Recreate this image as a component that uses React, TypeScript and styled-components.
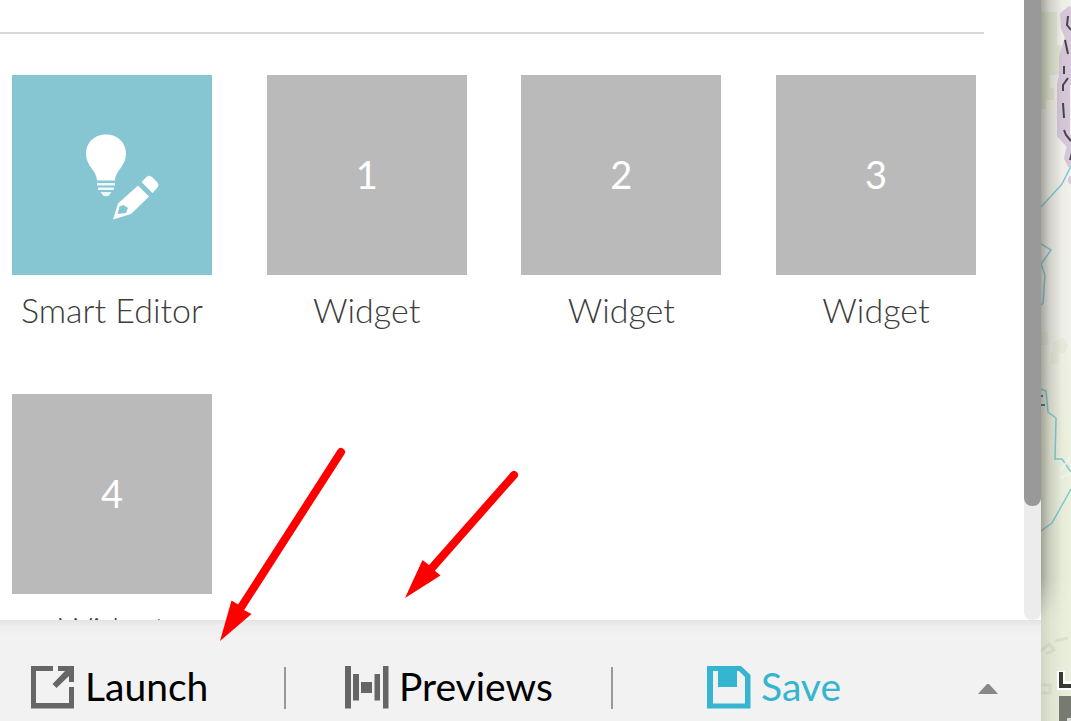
import React from "react";
import styled, { createGlobalStyle } from "styled-components";

const GlobalStyle = createGlobalStyle`
  *, *::before, *::after { box-sizing: border-box; }
  body { margin: 0; background: #fff; font-family: Lato, "Liberation Sans", sans-serif; }
`;

const Page = styled.div`
  position: relative;
  display: flex;
  height: 100vh;
  overflow: hidden;
`;

const Panel = styled.main`
  flex: 1;
  min-width: 0;
  display: flex;
  flex-direction: column;
  background: #fff;
`;

const ScrollArea = styled.div`
  flex: 1;
  min-height: 0;
  display: flex;
  overflow: hidden;
`;

const Content = styled.section`
  flex: 1;
  min-width: 0;
  padding: 32px 40px 0 0;
`;

const Rule = styled.hr`
  height: 2px;
  margin: 0 0 41px;
  border: 0;
  background: #d9d9d9;
`;

const WidgetGrid = styled.div`
  display: grid;
  grid-template-columns: repeat(4, 200px);
  justify-content: space-between;
  row-gap: 62px;
  padding: 0 8px 0 12px;
`;

const WidgetItem = styled.button`
  display: flex;
  flex-direction: column;
  align-items: center;
  gap: 13px;
  padding: 0;
  border: 0;
  background: none;
  font-family: inherit;
  cursor: pointer;
`;

const Tile = styled.span<{ $active?: boolean }>`
  display: flex;
  align-items: center;
  justify-content: center;
  width: 200px;
  height: 200px;
  padding-bottom: ${(p) => (p.$active ? 0 : 2)}px;
  background: ${(p) => (p.$active ? "#85c6d2" : "#bababa")};
  color: #fff;
  font-size: 38px;
  line-height: 44px;
`;

const WidgetLabel = styled.span`
  color: #3c3c3c;
  font-size: 34px;
  font-weight: 300;
  line-height: 44px;
  white-space: nowrap;
`;

const ScrollTrack = styled.div`
  flex: 0 0 17px;
  border-radius: 0 0 8px 8px;
  background: #ececec;
`;

const ScrollThumb = styled.div`
  height: calc(100% - 114px);
  border-radius: 0 0 8px 8px;
  background: #999;
`;

const Footer = styled.footer`
  display: grid;
  grid-template-columns: 286fr 327fr 428fr;
  padding: 45px 0 12px;
  background: linear-gradient(#e3e3e3, #eeeeee 6px, #f2f2f2 16px);
`;

const FooterCell = styled.div<{ $start: number; $end?: number }>`
  display: flex;
  align-items: center;
  justify-content: space-between;
  padding: 0 ${(p) => p.$end ?? 0}px 0 ${(p) => p.$start}px;
`;

const Divider = styled.span`
  align-self: flex-end;
  width: 2px;
  height: 42px;
  background: #999;
`;

const Action = styled.button<{ $accent?: boolean }>`
  display: flex;
  align-items: center;
  gap: 10px;
  padding: 0;
  border: 0;
  background: none;
  color: ${(p) => (p.$accent ? "#35b5cf" : "#000")};
  font-family: inherit;
  font-size: 39px;
  line-height: 44px;
  cursor: pointer;
`;

const ActionText = styled.span`
  height: 44px;
  line-height: 42px;
`;

const CaretButton = styled.button`
  display: flex;
  padding: 4px 0 0;
  border: 0;
  background: none;
  cursor: pointer;
`;

const MapStrip = styled.aside`
  flex: 0 0 30px;
  overflow: hidden;
  background: #eef2e0;
  svg { display: block; }
`;

const Annotations = styled.svg`
  position: absolute;
  top: 0;
  left: 0;
  pointer-events: none;
`;

const SmartEditorIcon = () => (
  <svg width="96" height="92" viewBox="64 131 96 92" fill="#fff" aria-hidden="true">
    <path d="M97 182.500C97 173 86 168 86 156C86 144 95 136.500 106 136.500S126 144 126 156C126 168 115 173 115 182.500Z" />
    <path d="M97 185H115V187.500H97ZM98 189.500H114V192H98ZM100.500 194H111.500L109 197.500Q106 199 103 197.500Z" opacity="0.85" />
    <path
      fillRule="evenodd"
      d="M138 187.500L149 198.500L131 216L113 221.500L118 205.500ZM119.500 208.500L117.500 216L126 215L128 210L123.500 207Z"
    />
    <path d="M141.500 184L146.500 179Q149.500 176.500 152.500 179.500L157.500 184.500Q159.500 187.500 157 190L152.500 195Z" />
  </svg>
);

const LaunchIcon = () => (
  <svg width="44" height="44" viewBox="0 0 44 44" fill="#666" aria-hidden="true">
    <path d="M0 1H22V6H5V38H38V22H43V43.500H0Z" />
    <path d="M27 1H43V17H38V11L25.500 23L21.500 19L34 6H27Z" />
  </svg>
);

const PreviewsIcon = () => (
  <svg width="44" height="44" viewBox="0 0 44 44" fill="#666" aria-hidden="true">
    <path d="M0 1H6V43.500H0ZM8 9H14V35.500H8ZM16 17H27V28H16ZM29.500 9H35V35.500H29.500ZM38 1H43.500V43.500H38Z" />
  </svg>
);

const SaveIcon = () => (
  <svg width="44" height="44" viewBox="0 0 44 44" fill="#35b5cf" aria-hidden="true">
    <path fillRule="evenodd" d="M0 1H34L43.500 10V43.500H0ZM6 6V38.500H38V12L32 6H30V22H11V6Z" />
  </svg>
);

const MapDrawing = () => (
  <svg width="30" height="721" viewBox="1041 0 30 721" fill="none" aria-hidden="true">
    <defs>
      <linearGradient id="land" x1="0" y1="0" x2="0" y2="1">
        <stop offset="0" stopColor="#f2f1ea" />
        <stop offset="0.45" stopColor="#f2f2ec" />
        <stop offset="0.6" stopColor="#edf1df" />
        <stop offset="1" stopColor="#e9eedb" />
      </linearGradient>
      <linearGradient id="edge">
        <stop offset="0" stopColor="#4b4d43" stopOpacity="0.46" />
        <stop offset="0.3" stopColor="#4b4d43" stopOpacity="0.2" />
        <stop offset="0.7" stopColor="#4b4d43" stopOpacity="0.03" />
        <stop offset="1" stopColor="#4b4d43" stopOpacity="0" />
      </linearGradient>
      <linearGradient id="fade" x1="0" y1="0" x2="0" y2="1">
        <stop offset="0" stopColor="#fff" />
        <stop offset="0.8" stopColor="#fff" />
        <stop offset="0.86" stopColor="#555" />
        <stop offset="1" stopColor="#555" />
      </linearGradient>
      <mask id="shade">
        <rect x="1041" width="30" height="721" fill="url(#fade)" />
      </mask>
    </defs>
    <rect x="1041" width="30" height="721" fill="url(#land)" />
    <path d="M1041 12H1057V45H1064V75H1050V88H1054V100H1046V109H1041Z" fill="#e3e9d5" />
    <path d="M1041 332H1048V345H1041ZM1053 342L1063 338L1068 345L1065 353H1059V364H1051V353H1053Z" fill="#e9eddd" />
    <path d="M1071 8L1063 15L1064 28L1068 37L1062 57V75L1060 84V135L1070 146L1067 158L1071 166" stroke="#d8c8dc" strokeWidth="6" />
    <path d="M1063 10H1071V150L1060 135V86L1063 55L1065 38Z" fill="#d8c8dc" />
    <path d="M1070 85H1071V135H1070Z" fill="#f4f1f2" />
    <circle cx="1073" cy="180" r="5" fill="#d8c8dc" />
    <path d="M1068 16L1067 25L1071 30M1065 40L1068 54M1064 66V74M1068 78L1063 85V91M1063 103L1064 118M1064 130L1066 135L1071 141M1072 153L1070 160" stroke="#454545" strokeWidth="2" />
    <path d="M1041 207L1062 184L1071 166M1041 244L1051 250L1041 264L1045 275L1043 303L1041 305M1041 389L1046 391L1048 412L1056 418L1055 459H1062L1071 472M1071 489L1052 523L1041 531" stroke="#7fcbd6" strokeWidth="1.500" />
    <path d="M1041 396H1043M1041 405H1045" stroke="#34788c" strokeWidth="2" />
    <path d="M1060 471L1071 456M1060 478L1071 473" stroke="#f3f5ea" strokeWidth="2" />
    <path d="M1041 651L1049 644L1054 650L1046 654M1055 641L1068 638M1041 685H1050V693H1041" stroke="#dde2cf" strokeWidth="3" />
    <rect x="1041" width="30" height="721" fill="url(#edge)" mask="url(#shade)" />
    <path d="M1057 671H1065V681H1071V690H1057Z" fill="#fff" />
    <path d="M1059 672H1063V684H1071V688H1059Z" fill="#383a38" />
    <path d="M1059 696H1071V721H1059Z" fill="#767a71" />
    <path d="M1067 718H1071V721H1067Z" fill="#ddd" />
  </svg>
);

const widgets = ["1", "2", "3", "4"];

export default function App() {
  return (
    <Page>
      <GlobalStyle />
      <Panel>
        <ScrollArea>
          <Content>
            <Rule />
            <WidgetGrid>
              <WidgetItem type="button">
                <Tile $active>
                  <SmartEditorIcon />
                </Tile>
                <WidgetLabel>Smart Editor</WidgetLabel>
              </WidgetItem>
              {widgets.map((n) => (
                <WidgetItem type="button" key={n}>
                  <Tile>{n}</Tile>
                  <WidgetLabel>Widget</WidgetLabel>
                </WidgetItem>
              ))}
            </WidgetGrid>
          </Content>
          <ScrollTrack>
            <ScrollThumb />
          </ScrollTrack>
        </ScrollArea>
        <Footer>
          <FooterCell $start={31}>
            <Action type="button">
              <LaunchIcon />
              <ActionText>Launch</ActionText>
            </Action>
            <Divider />
          </FooterCell>
          <FooterCell $start={59}>
            <Action type="button">
              <PreviewsIcon />
              <ActionText>Previews</ActionText>
            </Action>
            <Divider />
          </FooterCell>
          <FooterCell $start={94} $end={43}>
            <Action type="button" $accent>
              <SaveIcon />
              <ActionText>Save</ActionText>
            </Action>
            <CaretButton type="button" aria-label="More save options">
              <svg width="20" height="12" viewBox="0 0 20 12" aria-hidden="true">
                <path d="M0 11L9 1H11L20 11Z" fill="#888" />
              </svg>
            </CaretButton>
          </FooterCell>
        </Footer>
      </Panel>
      <MapStrip>
        <MapDrawing />
      </MapStrip>
      <Annotations width="540" height="650" viewBox="0 0 540 650" aria-hidden="true">
        <path d="M341 452L240 609M514 475L431 569" stroke="#f00" strokeWidth="8" strokeLinecap="round" />
        <path d="M220 641L231.500 600.500L239 605L244 610L251.500 614ZM405 598L422.500 560L429 565L434 570L440.500 575.500Z" fill="#f00" />
      </Annotations>
    </Page>
  );
}
